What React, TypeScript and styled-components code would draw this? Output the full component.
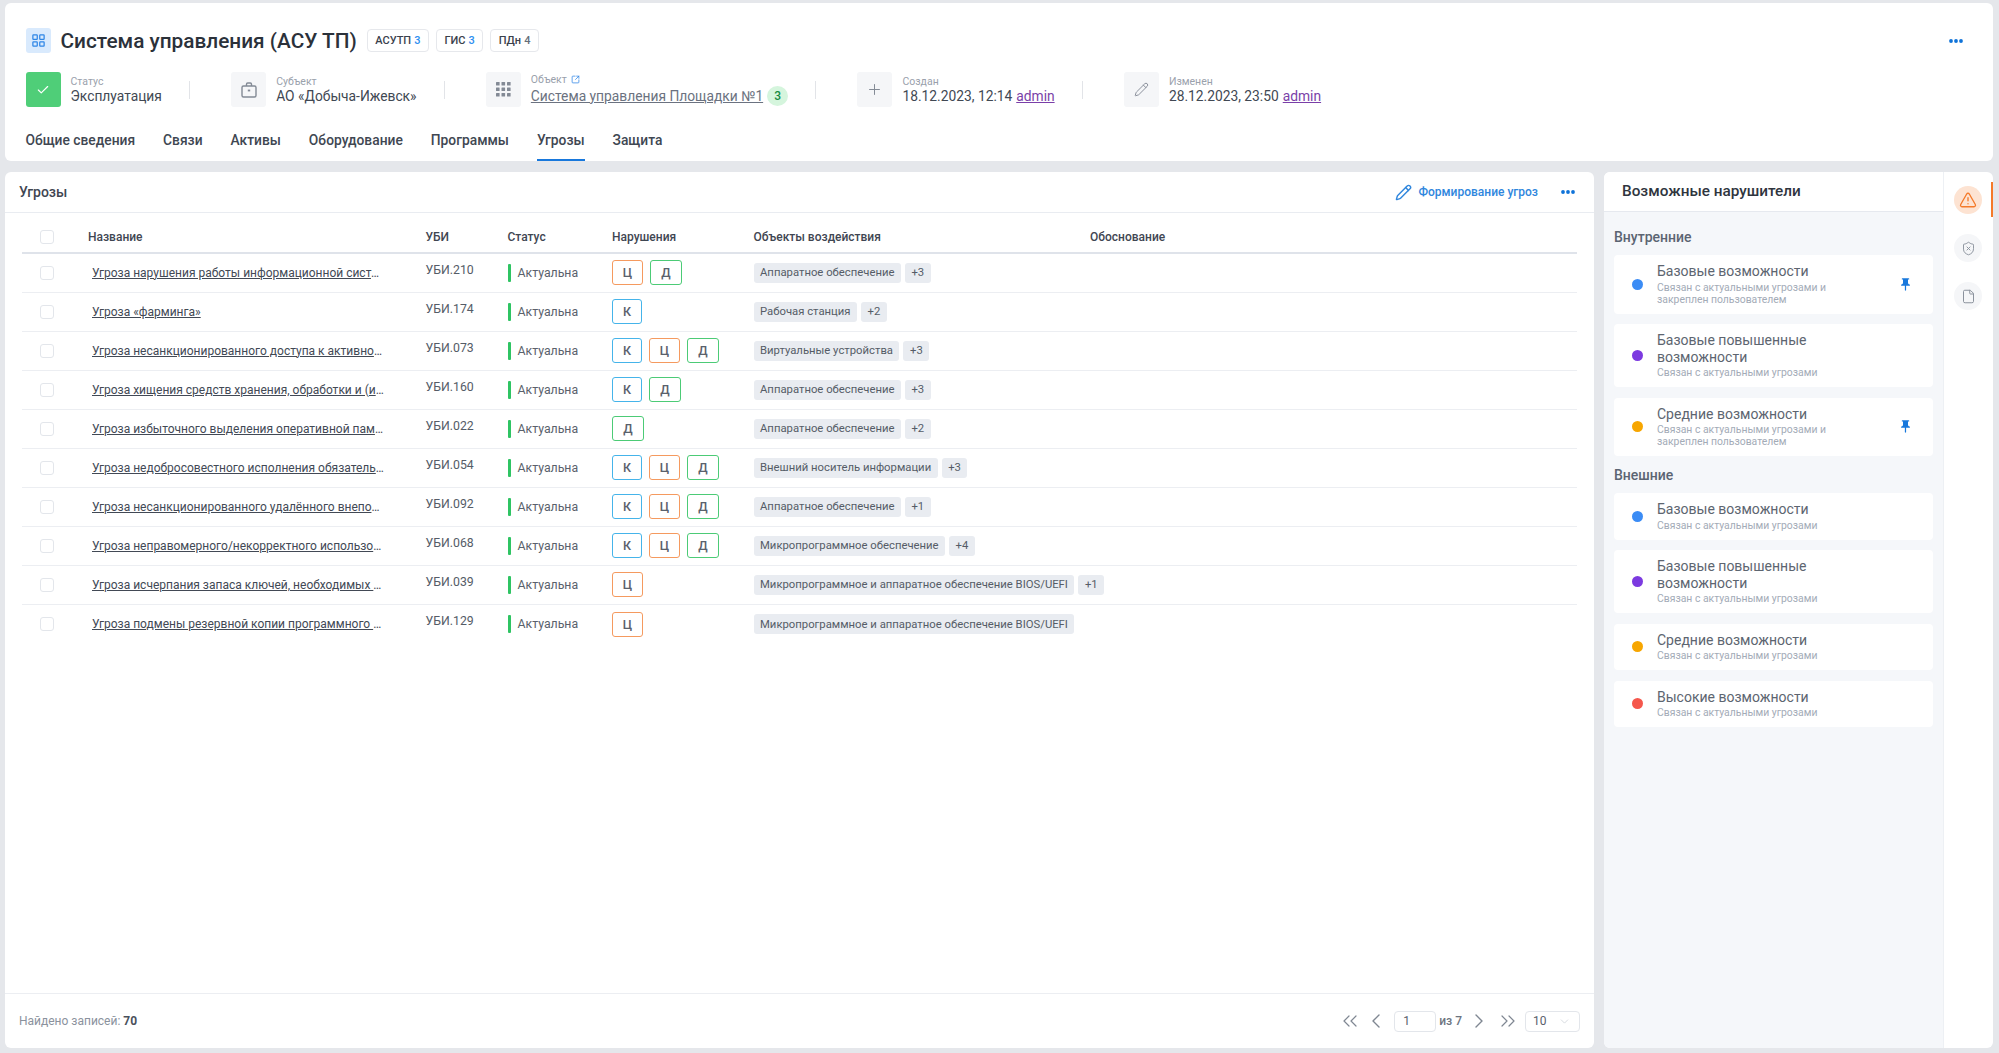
import React from "react";
import styled, { createGlobalStyle } from "styled-components";
import {
  LayoutGrid, Check, Plus, Pencil, SquareArrowOutUpRight, TriangleAlert, ShieldX, File,
  ChevronsLeft, ChevronsRight, ChevronLeft, ChevronRight, ChevronDown,
} from "lucide-react";
import { MdPushPin } from "react-icons/md";

const Global = createGlobalStyle`
  html, body { margin: 0; padding: 0; background: #e5e7eb; }
  body { font-family: Roboto, "Noto Sans", sans-serif; color: #3f4652; }
  * { box-sizing: border-box; }
`;

const Page = styled.div`
  width: 1999px; height: 1053px; padding: 3px 6px 5px 5px;
  display: flex; flex-direction: column; gap: 11px; overflow: hidden;
`;
const HeaderCard = styled.header`
  background: #fff; border-radius: 6px; height: 158px; padding: 25px 30px 0 20.5px;
  display: flex; flex-direction: column; flex: none;
`;
const TitleRow = styled.div`display: flex; align-items: center; height: 25px;`;
const TitleIcon = styled.span`
  width: 25px; height: 25px; border-radius: 3px; background: #d9eafd; color: #2f86e6;
  display: flex; align-items: center; justify-content: center; margin-right: 10px; flex: none;
`;
const Title = styled.h1`
  margin: 0 10px 0 0; padding-top: 1px; font-size: 20.8px; line-height: 25px; font-weight: 500; color: #2b313a; white-space: nowrap;
`;
const CountChip = styled.span`
  height: 23px; padding: 0 7.5px; margin-right: 7px; border: 1px solid #e6e8ec; border-radius: 4px;
  font-size: 11px; font-weight: 500; color: #3a414c; display: flex; align-items: center; gap: 3px;
`;
const CountValue = styled.span<{ $muted?: boolean }>`
  font-weight: 500; color: ${p => (p.$muted ? "#666e7a" : "#2f8ff0")};
`;
const Dots = styled.svg`display: block; margin-left: auto; color: #0f73d9;`;
const MetaRow = styled.div`display: flex; align-items: center; height: 35px; margin-top: 19px;`;
const MetaIcon = styled.span<{ $ok?: boolean }>`
  width: 35px; height: 35px; border-radius: 3px; flex: none; margin-right: 10px;
  display: flex; align-items: center; justify-content: center;
  background: ${p => (p.$ok ? "#4fce78" : "#f5f6f8")}; color: ${p => (p.$ok ? "#fff" : "#838a95")};
`;
const MetaText = styled.div`display: flex; flex-direction: column; white-space: nowrap;`;
const MetaLabel = styled.span`
  font-size: 10.5px; line-height: 13px; color: #9aa1ac; display: flex; align-items: center; gap: 4px;
  svg { color: #2f86e6; }
`;
const MetaValue = styled.span`
  font-size: 13.8px; line-height: 17px; color: #414853; display: flex; align-items: center; gap: 4px;
`;
const MetaLink = styled.a`color: #6b7280; text-decoration: underline;`;
const UserLink = styled.a`color: #7a3fa8; text-decoration: underline;`;
const GreenBadge = styled.span`
  width: 21px; height: 20px; border-radius: 50%; background: #d5f5dd; color: #168a3f;
  font-size: 12px; font-weight: 500; display: flex; align-items: center; justify-content: center;
`;
const MetaDivider = styled.span`
  width: 1px; height: 18px; background: #e2e4e8; margin: 0 41px 0 27.3px; flex: none;
`;
const Tabs = styled.nav`display: flex; gap: 28px; margin-top: 14px; height: 41.5px;`;
const Tab = styled.span<{ $active?: boolean }>`
  font-size: 13.8px; font-weight: 500; color: #404752; display: flex; align-items: center;
  padding-bottom: 1px; white-space: nowrap;
  border-bottom: 2px solid ${p => (p.$active ? "#1878dc" : "transparent")};
`;

const Columns = styled.div`display: flex; gap: 10px; height: 876px; flex: none;`;
const MainCard = styled.section`
  width: 1589px; background: #fff; border-radius: 6px; display: flex; flex-direction: column;
`;
const CardHead = styled.div`
  height: 41px; flex: none; padding: 0 19px 0 14px; border-bottom: 1px solid #e9ecf1;
  display: flex; align-items: center;
`;
const CardTitle = styled.h2`margin: 0; font-size: 14px; font-weight: 500; color: #3f4652;`;
const ActionButton = styled.span`
  margin-left: auto; margin-right: 23px; display: flex; align-items: center; gap: 6px;
  font-size: 12px; font-weight: 500; color: #2f86dd;
`;
const CardDots = styled(Dots)`margin-left: 0;`;
const Table = styled.div`flex: 1; margin: 0 17px 0 17px;`;
const gridCols = "66px 337.5px 82px 104.5px 141.5px 336.5px 1fr";
const HeadRow = styled.div`
  height: 40.5px; padding-top: 9px; display: grid; grid-template-columns: ${gridCols}; align-items: center;
  border-bottom: 2px solid #dfe3ea;
`;
const HeadCell = styled.span`font-size: 12px; font-weight: 500; color: #3f4652; white-space: nowrap;`;
const Row = styled.div`
  height: 39px; display: grid; grid-template-columns: ${gridCols}; align-items: center;
  border-bottom: 1px solid #eceef2;
  &:last-child { border-bottom: none; }
`;
const Box = styled.span`
  display: block; width: 14px; height: 14px; margin-left: 18px; border: 1px solid #e3e6eb; border-radius: 3px; background: #fff;
`;
const NameCell = styled.a`
  display: block; max-width: 293px; margin-left: 4px; font-size: 12px; color: #424955; text-decoration: underline;
  white-space: nowrap; overflow: hidden; text-overflow: ellipsis;
`;
const Code = styled.span`font-size: 12.3px; color: #555c67; font-weight: 400; padding-bottom: 6px;`;
const Status = styled.span`
  display: flex; align-items: center; font-size: 12.3px; color: #5a616c; height: 18px; gap: 7px;
  &::before { content: ""; width: 3px; height: 18px; background: #2fc463; border-radius: 1px; }
`;
const Chips = styled.div`display: flex; gap: 7px;`;
const chipColor = { К: "#45b4ea", Ц: "#f59a5f", Д: "#4ccb76" } as const;
const Chip = styled.span<{ $k: keyof typeof chipColor }>`
  width: ${p => (p.$k === "К" ? 30 : p.$k === "Ц" ? 31 : 32)}px; height: 25px; border-radius: 3px;
  border: 1px solid ${p => chipColor[p.$k]};
  display: flex; align-items: center; justify-content: center; font-size: 12.5px; font-weight: 500; color: #5a616c;
`;
const Tags = styled.div`display: flex; gap: 4px; grid-column: span 2;`;
const Tag = styled.span`
  height: 20px; padding: 0 6.5px; background: #e9ecf1; border-radius: 3px; white-space: nowrap;
  font-size: 11.3px; color: #555c67; display: flex; align-items: center;
`;
const Footer = styled.div`
  height: 55px; flex: none; border-top: 1px solid #eceef2; padding: 0 14px 0 14px;
  display: flex; align-items: center; justify-content: space-between;
`;
const Found = styled.span`font-size: 12px; color: #8b929d; b { color: #4a515c; font-weight: 700; }`;
const Pager = styled.div`display: flex; align-items: center; color: #7f8792;`;
const PagerButton = styled.span<{ $gap: number }>`display: flex; margin-right: ${p => p.$gap}px;`;
const PageInput = styled.span`
  width: 42px; height: 21px; border: 1px solid #e3e6eb; border-radius: 4px; padding-left: 8px;
  font-size: 12px; color: #5a616c; display: flex; align-items: center; margin-right: 3px;
`;
const PageOf = styled.span`font-size: 12px; font-weight: 500; color: #6d747f; margin-right: 5px;`;
const PageSize = styled.span`
  width: 55px; height: 21px; border: 1px solid #e3e6eb; border-radius: 4px; padding: 0 8px 0 7px;
  font-size: 12px; color: #5a616c; display: flex; align-items: center; justify-content: space-between;
  svg { color: #c2c7cf; }
`;

const SideCard = styled.aside`
  flex: 1; background: #fff; border-radius: 6px; display: flex; overflow: hidden;
`;
const SidePanel = styled.div`
  width: 340px; flex: none; display: flex; flex-direction: column; border-right: 1px solid #edf0f4;
`;
const SideHead = styled.div`
  height: 40px; flex: none; padding-left: 18px; padding-bottom: 1px; border-bottom: 1px solid #e6e9ef; display: flex; align-items: center;
  font-size: 15.3px; font-weight: 500; color: #2f353e; background: #fff;
`;
const SideBody = styled.div`flex: 1; background: #f5f7fa; padding: 17px 10px 0;`;
const GroupTitle = styled.h3<{ $next?: boolean }>`
  margin: ${p => (p.$next ? "11px" : "0")} 0 10px; font-size: 14px; line-height: 16px; font-weight: 500; color: #5b6472;
`;
const Items = styled.div`display: flex; flex-direction: column; gap: 10.5px;`;
const Item = styled.div`
  background: #fff; border-radius: 4px; padding: 8px 14px 8px 18px; display: flex; align-items: center;
`;
const Dot = styled.span<{ $c: string }>`
  width: 11px; height: 11px; border-radius: 50%; background: ${p => p.$c}; margin-right: 14px; flex: none;
`;
const ItemText = styled.div`width: 186px;`;
const ItemTitle = styled.div`font-size: 14px; line-height: 16.5px; color: #5d6570;`;
const ItemSub = styled.div`font-size: 10.4px; line-height: 12px; margin-top: 2px; color: #a3abb7;`;
const Pin = styled.span`margin-left: auto; margin-right: 6px; display: flex; color: #1878dc;`;
const Rail = styled.div`
  flex: 1; position: relative; display: flex; flex-direction: column; align-items: center; gap: 20px; padding-top: 14px; padding-right: 1px;
`;
const RailButton = styled.span<{ $active?: boolean }>`
  width: 28px; height: 28px; border-radius: 50%; display: flex; align-items: center; justify-content: center;
  background: ${p => (p.$active ? "#fde3d2" : "#f5f6f8")}; color: ${p => (p.$active ? "#f47a2a" : "#8b929d")};
`;
const RailMark = styled.span`
  position: absolute; top: 10px; right: 0; width: 2px; height: 35px; background: #f47a2a;
`;

const threeDots = (
  <>
    <circle cx="2" cy="3" r="1.9" fill="currentColor" />
    <circle cx="7" cy="3" r="1.9" fill="currentColor" />
    <circle cx="12" cy="3" r="1.9" fill="currentColor" />
  </>
);

type K = "К" | "Ц" | "Д";
const rows: { name: string; code: string; chips: K[]; tag: string; more: string }[] = [
  { name: "Угроза нарушения работы информационной системы, вызванного обновлением", code: "УБИ.210", chips: ["Ц", "Д"], tag: "Аппаратное обеспечение", more: "+3" },
  { name: "Угроза «фарминга»", code: "УБИ.174", chips: ["К"], tag: "Рабочая станция", more: "+2" },
  { name: "Угроза несанкционированного доступа к активному и (или) пассивному оборудованию", code: "УБИ.073", chips: ["К", "Ц", "Д"], tag: "Виртуальные устройства", more: "+3" },
  { name: "Угроза хищения средств хранения, обработки и (или) ввода/вывода/передачи информации", code: "УБИ.160", chips: ["К", "Д"], tag: "Аппаратное обеспечение", more: "+3" },
  { name: "Угроза избыточного выделения оперативной памяти виртуальной машине", code: "УБИ.022", chips: ["Д"], tag: "Аппаратное обеспечение", more: "+2" },
  { name: "Угроза недобросовестного исполнения обязательств поставщиками услуг", code: "УБИ.054", chips: ["К", "Ц", "Д"], tag: "Внешний носитель информации", more: "+3" },
  { name: "Угроза несанкционированного удалённого внеполосного доступа к аппаратным средствам", code: "УБИ.092", chips: ["К", "Ц", "Д"], tag: "Аппаратное обеспечение", more: "+1" },
  { name: "Угроза неправомерного/некорректного использования интерфейса взаимодействия", code: "УБИ.068", chips: ["К", "Ц", "Д"], tag: "Микропрограммное обеспечение", more: "+4" },
  { name: "Угроза исчерпания запаса ключей, необходимых для обновления BIOS", code: "УБИ.039", chips: ["Ц"], tag: "Микропрограммное и аппаратное обеспечение BIOS/UEFI", more: "+1" },
  { name: "Угроза подмены резервной копии программного обеспечения BIOS", code: "УБИ.129", chips: ["Ц"], tag: "Микропрограммное и аппаратное обеспечение BIOS/UEFI", more: "" },
];

const BLUE = "#3b8cf5", PURPLE = "#7c3ae0", AMBER = "#f7a600", RED = "#f5574c";
const PINNED = "Связан с актуальными угрозами и закреплен пользователем";
const LINKED = "Связан с актуальными угрозами";
const inner = [
  { t: "Базовые возможности", s: PINNED, c: BLUE, pin: true },
  { t: "Базовые повышенные возможности", s: LINKED, c: PURPLE },
  { t: "Средние возможности", s: PINNED, c: AMBER, pin: true },
];
const outer = [
  { t: "Базовые возможности", s: LINKED, c: BLUE },
  { t: "Базовые повышенные возможности", s: LINKED, c: PURPLE },
  { t: "Средние возможности", s: LINKED, c: AMBER },
  { t: "Высокие возможности", s: LINKED, c: RED },
];

const Offender = ({ t, s, c, pin }: { t: string; s: string; c: string; pin?: boolean }) => (
  <Item>
    <Dot $c={c} />
    <ItemText>
      <ItemTitle>{t}</ItemTitle>
      <ItemSub>{s}</ItemSub>
    </ItemText>
    {pin && <Pin><MdPushPin size={15} /></Pin>}
  </Item>
);

export default function App() {
  return (
    <Page>
      <Global />
      <HeaderCard>
        <TitleRow>
          <TitleIcon><LayoutGrid size={15} strokeWidth={2} /></TitleIcon>
          <Title>Система управления (АСУ ТП)</Title>
          <CountChip>АСУТП <CountValue>3</CountValue></CountChip>
          <CountChip>ГИС <CountValue>3</CountValue></CountChip>
          <CountChip>ПДн <CountValue $muted>4</CountValue></CountChip>
          <Dots width="14" height="6" viewBox="0 0 14 6">{threeDots}</Dots>
        </TitleRow>
        <MetaRow>
          <MetaIcon $ok><Check size={14} strokeWidth={2} /></MetaIcon>
          <MetaText>
            <MetaLabel>Статус</MetaLabel>
            <MetaValue>Эксплуатация</MetaValue>
          </MetaText>
          <MetaDivider />
          <MetaIcon>
            <svg width="18" height="18" viewBox="0 0 18 18" fill="none" stroke="currentColor" strokeWidth="1.4">
              <rect x="2" y="5" width="14" height="11" rx="1.5" />
              <path d="M6.5 5V3.2c0-.7.5-1.2 1.2-1.2h2.6c.7 0 1.2.5 1.2 1.2V5" />
              <path d="M7.8 9.5h2.4" strokeWidth="1.8" />
            </svg>
          </MetaIcon>
          <MetaText>
            <MetaLabel>Субъект</MetaLabel>
            <MetaValue>АО «Добыча-Ижевск»</MetaValue>
          </MetaText>
          <MetaDivider />
          <MetaIcon>
            <svg width="15" height="15" viewBox="0 0 15 15" fill="currentColor">
              {[0, 5.5, 11].flatMap(y => [0, 5.5, 11].map(x => <rect key={`${x}-${y}`} x={x} y={y} width="3.6" height="3.6" rx=".5" />))}
            </svg>
          </MetaIcon>
          <MetaText>
            <MetaLabel>Объект <SquareArrowOutUpRight size={9} strokeWidth={2} /></MetaLabel>
            <MetaValue><MetaLink>Система управления Площадки №1</MetaLink><GreenBadge>3</GreenBadge></MetaValue>
          </MetaText>
          <MetaDivider />
          <MetaIcon><Plus size={17} strokeWidth={1.4} /></MetaIcon>
          <MetaText>
            <MetaLabel>Создан</MetaLabel>
            <MetaValue><span>18.12.2023, 12:14</span><UserLink>admin</UserLink></MetaValue>
          </MetaText>
          <MetaDivider />
          <MetaIcon><Pencil size={15} strokeWidth={1.5} /></MetaIcon>
          <MetaText>
            <MetaLabel>Изменен</MetaLabel>
            <MetaValue><span>28.12.2023, 23:50</span><UserLink>admin</UserLink></MetaValue>
          </MetaText>
        </MetaRow>
        <Tabs>
          <Tab>Общие сведения</Tab>
          <Tab>Связи</Tab>
          <Tab>Активы</Tab>
          <Tab>Оборудование</Tab>
          <Tab>Программы</Tab>
          <Tab $active>Угрозы</Tab>
          <Tab>Защита</Tab>
        </Tabs>
      </HeaderCard>
      <Columns>
        <MainCard>
          <CardHead>
            <CardTitle>Угрозы</CardTitle>
            <ActionButton><Pencil size={17} strokeWidth={2} />Формирование угроз</ActionButton>
            <CardDots width="14" height="6" viewBox="0 0 14 6">{threeDots}</CardDots>
          </CardHead>
          <Table>
            <HeadRow>
              <Box />
              <HeadCell>Название</HeadCell>
              <HeadCell>УБИ</HeadCell>
              <HeadCell>Статус</HeadCell>
              <HeadCell>Нарушения</HeadCell>
              <HeadCell>Объекты воздействия</HeadCell>
              <HeadCell>Обоснование</HeadCell>
            </HeadRow>
            {rows.map(r => (
              <Row key={r.code}>
                <Box />
                <NameCell>{r.name}</NameCell>
                <Code>{r.code}</Code>
                <Status>Актуальна</Status>
                <Chips>{r.chips.map(k => <Chip key={k} $k={k}>{k}</Chip>)}</Chips>
                <Tags>
                  <Tag>{r.tag}</Tag>
                  {r.more && <Tag>{r.more}</Tag>}
                </Tags>
              </Row>
            ))}
          </Table>
          <Footer>
            <Found>Найдено записей: <b>70</b></Found>
            <Pager>
              <PagerButton $gap={2}><ChevronsLeft size={24} strokeWidth={1.2} /></PagerButton>
              <PagerButton $gap={6}><ChevronLeft size={24} strokeWidth={1.4} /></PagerButton>
              <PageInput>1</PageInput>
              <PageOf>из 7</PageOf>
              <PagerButton $gap={5}><ChevronRight size={24} strokeWidth={1.4} /></PagerButton>
              <PagerButton $gap={5}><ChevronsRight size={24} strokeWidth={1.2} /></PagerButton>
              <PageSize>10<ChevronDown size={13} strokeWidth={1.2} /></PageSize>
            </Pager>
          </Footer>
        </MainCard>
        <SideCard>
          <SidePanel>
            <SideHead>Возможные нарушители</SideHead>
            <SideBody>
              <GroupTitle>Внутренние</GroupTitle>
              <Items>{inner.map(i => <Offender key={i.t} {...i} />)}</Items>
              <GroupTitle $next>Внешние</GroupTitle>
              <Items>{outer.map(i => <Offender key={i.t} {...i} />)}</Items>
            </SideBody>
          </SidePanel>
          <Rail>
            <RailMark />
            <RailButton $active><TriangleAlert size={18} strokeWidth={1.8} /></RailButton>
            <RailButton><ShieldX size={15} strokeWidth={1.5} /></RailButton>
            <RailButton><File size={15} strokeWidth={1.6} /></RailButton>
          </Rail>
        </SideCard>
      </Columns>
    </Page>
  );
}
